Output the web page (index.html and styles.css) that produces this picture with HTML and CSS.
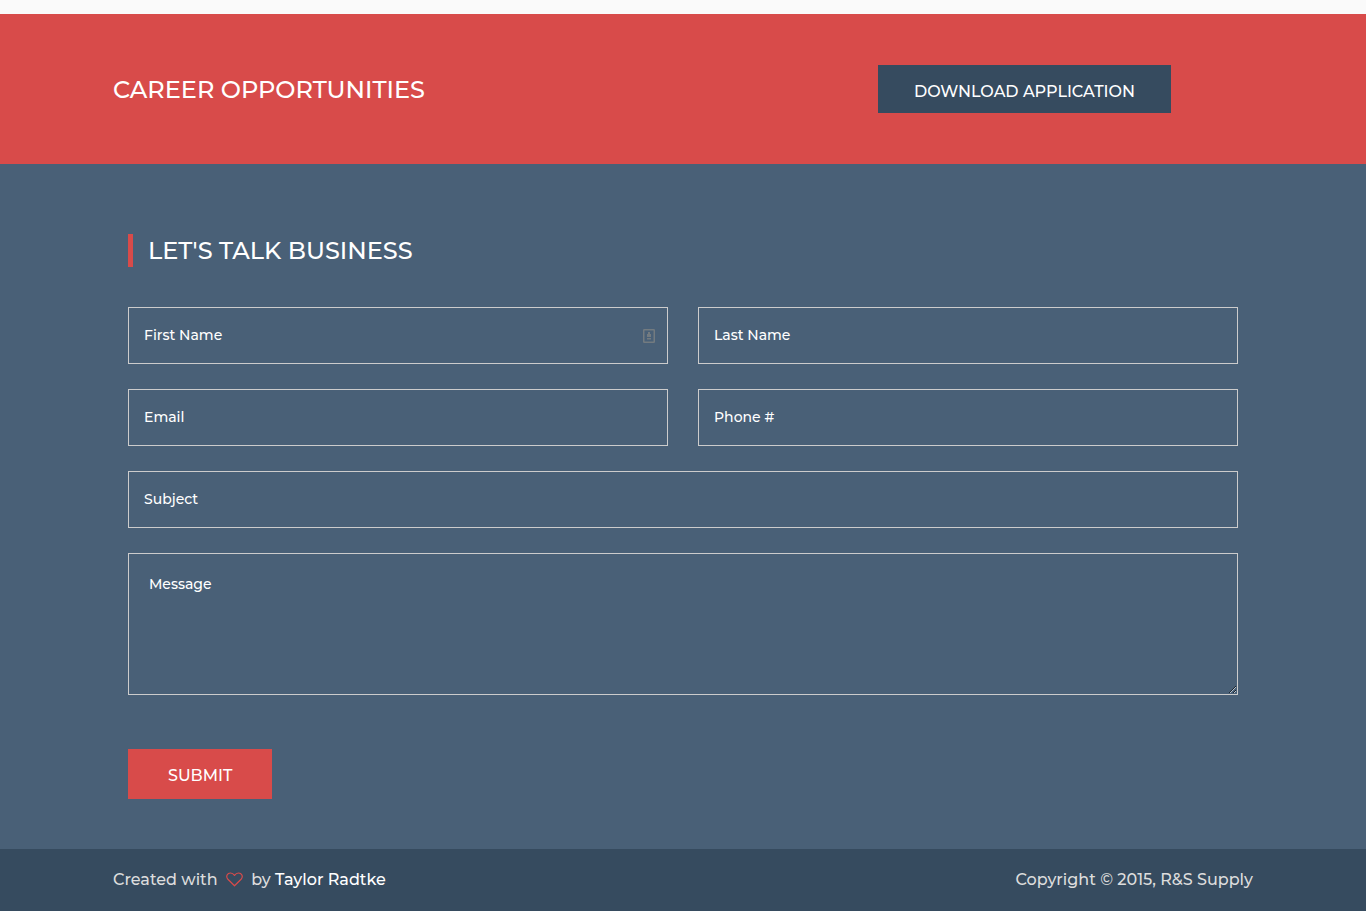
FILE: index.html
```html
<!DOCTYPE html>
<html lang="en">
<head>
<meta charset="utf-8">
<meta name="viewport" content="width=device-width, initial-scale=1">
<title>R&amp;S Supply</title>
<link rel="stylesheet" href="styles.css">
</head>
<body>
<section class="careers">
  <div class="container careers-row">
    <h2 class="careers-title">CAREER OPPORTUNITIES</h2>
    <div class="careers-action"><a class="btn btn-dark" href="#">DOWNLOAD APPLICATION</a></div>
  </div>
</section>
<section class="contact">
  <form class="container contact-form">
    <h2 class="contact-title">LET'S TALK BUSINESS</h2>
    <div class="fields">
      <div class="field">
        <input class="control" type="text" placeholder="First Name" aria-label="First Name">
        <svg class="autofill" viewBox="0 0 12 14" aria-hidden="true"><rect x="0.75" y="0.75" width="10.5" height="12.5" rx="0.5" fill="none" stroke="currentColor" stroke-width="1.5"/><path d="M5 3h2v2h1v3H4V5h1zM4 9h4v1.5H4z" fill="currentColor"/></svg>
      </div>
      <div class="field"><input class="control" type="text" placeholder="Last Name" aria-label="Last Name"></div>
      <div class="field"><input class="control" type="email" placeholder="Email" aria-label="Email"></div>
      <div class="field"><input class="control" type="tel" placeholder="Phone #" aria-label="Phone #"></div>
      <div class="field wide"><input class="control" type="text" placeholder="Subject" aria-label="Subject"></div>
      <div class="field wide"><textarea class="control message" placeholder="Message" aria-label="Message"></textarea></div>
    </div>
    <button class="btn btn-red" type="submit">SUBMIT</button>
  </form>
</section>
<footer class="footer">
  <div class="container footer-row">
    <p class="credit">Created with <svg class="heart" viewBox="0 0 17 15" role="img" aria-label="love"><path d="M8.5 13.8 1.9 7.3C-.6 4.4 1.4 1 4.5 1 6.6 1 7.8 2.4 8.5 3.4 9.2 2.4 10.4 1 12.5 1c3.1 0 5.1 3.4 2.6 6.3Z" fill="none" stroke="currentColor" stroke-width="1.2" stroke-linejoin="round"/></svg> by <a class="author" href="#">Taylor Radtke</a></p>
    <p class="copyright">Copyright © 2015, R&amp;S Supply</p>
  </div>
</footer>
</body>
</html>
```
FILE: styles.css
```css
* { box-sizing: border-box; }
body {
  margin: 0;
  padding-top: 14px;
  background: #fafafa;
  color: #fff;
  font-family: Montserrat, "Open Sans", sans-serif;
  font-size: 16px;
  font-weight: 500;
}
h2, p { margin: 0; }
a { color: inherit; text-decoration: none; }
.container { width: 100%; max-width: 1140px; margin: 0 auto; }
.careers { background: #d84b4a; padding: 51px 0; }
.careers-row { display: grid; grid-template-columns: 2fr 1fr; align-items: center; }
.careers-title, .contact-title { font-size: 24px; font-weight: 500; line-height: 33px; }
.careers-action { padding-left: 5px; }
.btn {
  display: inline-block;
  border: 0;
  height: 48px;
  padding: 4px 36px 0;
  color: #fff;
  font: inherit;
  line-height: 46px;
}
.btn-dark { background: #364b5f; }
.btn-red { background: #d84b4a; height: 50px; padding: 4px 40px 0; }
.contact { background: #496077; padding: 70px 0 50px; }
.contact-form { padding: 0 15px; }
.contact-title { border-left: 5px solid #d84b4a; padding-left: 15px; margin-bottom: 40px; }
.fields { display: grid; grid-template-columns: 1fr 1fr; gap: 25px 30px; margin-bottom: 54px; }
.field { position: relative; display: flex; }
.wide { grid-column: span 2; }
.control {
  width: 100%;
  height: 57px;
  border: 1px solid #ccc;
  border-radius: 0;
  background: transparent;
  padding: 0 15px 2px;
  color: #fff;
  font: inherit;
  font-size: 14px;
}
.control::placeholder { color: #fff; opacity: 1; }
.message { height: 142px; padding: 20px; line-height: 20px; resize: vertical; }
.autofill { position: absolute; right: 13px; top: 22px; width: 12px; height: 14px; color: #737b80; }
.footer { background: #364b5f; padding: 18px 0 19px; color: #ddd; }
.footer-row { display: flex; justify-content: space-between; line-height: 25px; }
.heart { width: 17px; height: 15px; margin: 0 4px; color: #d84b4a; vertical-align: -2px; }
.author { color: #fff; }
```
